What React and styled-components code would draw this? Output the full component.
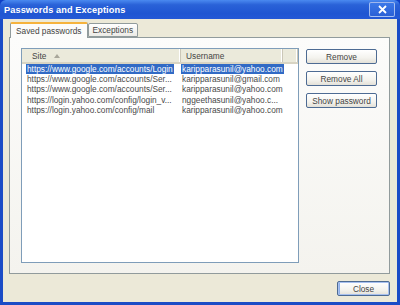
import styled, { createGlobalStyle } from "styled-components";

const GlobalStyle = createGlobalStyle`
  body {
    margin: 0;
    font-family: "Liberation Sans", Arial, sans-serif;
  }
`;

const logins = [
  { site: "https://www.google.com/accounts/Login", user: "karipparasunil@yahoo.com", selected: true },
  { site: "https://www.google.com/accounts/Ser...", user: "karipparasunil@gmail.com" },
  { site: "https://www.google.com/accounts/Ser...", user: "karipparasunil@yahoo.com" },
  { site: "https://login.yahoo.com/config/login_v...", user: "nggeethasunil@yahoo.c..." },
  { site: "https://login.yahoo.com/config/mail", user: "karipparasunil@yahoo.com" },
];

export default function App() {
  return (
    <>
      <GlobalStyle />
      <Window>
        <TitleBar>
          <Title>Passwords and Exceptions</Title>
          <CloseBox>
            <svg width="9" height="9" viewBox="0 0 9 9">
              <path d="M1 1 L8 8 M8 1 L1 8" stroke="#fff" strokeWidth="1.8" />
            </svg>
          </CloseBox>
        </TitleBar>
        <Frame>
          <TabStrip>
            <Tab $active>Saved passwords</Tab>
            <Tab>Exceptions</Tab>
          </TabStrip>
          <Panel>
            <List>
              <Header>
                <HeaderCell $pad={10}>
                  Site
                  <SortArrow />
                </HeaderCell>
                <HeaderCell $pad={5}>Username</HeaderCell>
                <HeaderCell />
              </Header>
              {logins.map((row, i) => (
                <Row key={i}>
                  <SiteCell>
                    <Label $selected={row.selected}>{row.site}</Label>
                  </SiteCell>
                  <UserCell>
                    <Label $selected={row.selected}>{row.user}</Label>
                  </UserCell>
                </Row>
              ))}
            </List>
            <ButtonColumn>
              <Button>Remove</Button>
              <Button>Remove All</Button>
              <Button>Show password</Button>
            </ButtonColumn>
          </Panel>
          <Footer>
            <Button $default $width={53}>Close</Button>
          </Footer>
        </Frame>
      </Window>
    </>
  );
}

const Window = styled.div`
  width: 400px;
  height: 305px;
  display: flex;
  flex-direction: column;
  background: #0f3fc6;
`;

const TitleBar = styled.div`
  height: 19px;
  display: flex;
  align-items: center;
  justify-content: space-between;
  padding: 0 5px 0 4px;
  background: linear-gradient(#4a8af0 0%, #2a62d8 25%, #1f56d2 70%, #2459d6 100%);
  border-radius: 6px 6px 0 0;
`;

const Title = styled.span`
  color: #fff;
  font-weight: bold;
  font-size: 9.2px;
  letter-spacing: 0.1px;
`;

const CloseBox = styled.div`
  width: 26px;
  height: 15px;
  box-sizing: border-box;
  display: flex;
  align-items: center;
  justify-content: center;
  border: 1px solid rgba(255, 255, 255, 0.55);
  border-radius: 2px;
  background: linear-gradient(#3b78e8, #2a60d6);
`;

const Frame = styled.div`
  flex: 1;
  display: flex;
  flex-direction: column;
  background: #ece9d8;
  border: 3px solid #1b4cc6;
  border-top: none;
  padding: 3px 7px 6px 6px;
  font-size: 8.3px;
  color: #444;
`;

const TabStrip = styled.div`
  height: 15px;
  display: flex;
  align-items: flex-end;
  padding-left: 1px;
  position: relative;
  z-index: 1;
`;

const Tab = styled.div`
  box-sizing: border-box;
  height: ${(p) => (p.$active ? 16 : 14)}px;
  margin-bottom: ${(p) => (p.$active ? -1 : 0)}px;
  padding: 0 ${(p) => (p.$active ? 5 : 4)}px;
  display: flex;
  align-items: center;
  border: 1px solid #919b9c;
  border-bottom: ${(p) => (p.$active ? "none" : "1px solid #919b9c")};
  border-top: ${(p) => (p.$active ? "2px solid #f6b33d" : "1px solid #919b9c")};
  border-radius: 2px 2px 0 0;
  background: ${(p) => (p.$active ? "#fcfcfb" : "linear-gradient(#ffffff, #ecebe6)")};
  color: #444;
`;

const Panel = styled.div`
  height: 237px;
  box-sizing: border-box;
  display: flex;
  gap: 7px;
  padding: 10px 12px 10px 11px;
  border: 1px solid #919b9c;
  background: linear-gradient(#fcfcfb, #f4f3ee);
`;

const List = styled.div`
  width: 278px;
  box-sizing: border-box;
  border: 1px solid #7f9db9;
  background: #fff;
  display: flex;
  flex-direction: column;
`;

const Header = styled.div`
  height: 15px;
  box-sizing: border-box;
  display: grid;
  grid-template-columns: 159px 102px 1fr;
  background: #ebeadb;
  border-bottom: 2px solid #d8d4c3;
`;

const HeaderCell = styled.div`
  display: flex;
  align-items: center;
  gap: 8px;
  padding-left: ${(p) => p.$pad || 0}px;
  border-right: 1px solid #cbc7b8;
  box-shadow: inset -1px 0 0 #fff;
  color: #444;
`;

const SortArrow = styled.span`
  width: 0;
  height: 0;
  border-left: 3.5px solid transparent;
  border-right: 3.5px solid transparent;
  border-bottom: 4px solid #a9a79b;
`;

const Row = styled.div`
  height: 10.2px;
  line-height: 10px;
  display: grid;
  grid-template-columns: 159px 1fr;
  white-space: nowrap;
`;

const SiteCell = styled.div`
  padding-left: 4px;
  overflow: hidden;
`;

const UserCell = styled.div`
  overflow: hidden;
`;

const Label = styled.span`
  display: inline-block;
  padding: 0 1px;
  color: ${(p) => (p.$selected ? "#fff" : "#4a4a4a")};
  background: ${(p) => (p.$selected ? "#316ac5" : "transparent")};
`;

const ButtonColumn = styled.div`
  display: flex;
  flex-direction: column;
  gap: 7px;
  margin-top: 1px;
`;

const Button = styled.button`
  width: ${(p) => p.$width || 71}px;
  height: 15px;
  padding: 0;
  font-family: inherit;
  font-size: 8.3px;
  color: #444;
  border: 1px solid #4d6b93;
  border-radius: 2px;
  background: linear-gradient(#ffffff 0%, #f4f3ee 60%, #e3e1d8 100%);
  box-shadow: ${(p) => (p.$default ? "inset 0 0 0 1px #a7c0ef, inset 1px 0 0 1px #8fb0ea" : "none")};
`;

const Footer = styled.div`
  display: flex;
  justify-content: flex-end;
  margin-top: 7px;
`;
